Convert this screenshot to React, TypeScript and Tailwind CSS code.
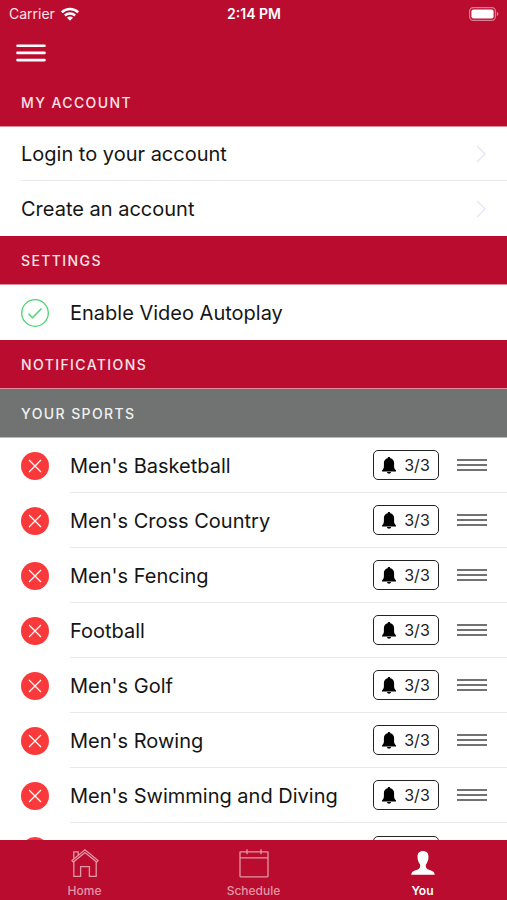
/**
 * Account / settings screen of the sports app
 * Sections of plain rows, the list of followed sports and the bottom tab bar.
 */

import React, { useState } from 'react';

interface Sport {
  id: string;
  name: string;
  alerts: string;
}

const SPORTS: Sport[] = [
  { id: 'mbb', name: "Men's Basketball", alerts: '3/3' },
  { id: 'mxc', name: "Men's Cross Country", alerts: '3/3' },
  { id: 'mfen', name: "Men's Fencing", alerts: '3/3' },
  { id: 'fb', name: 'Football', alerts: '3/3' },
  { id: 'mgolf', name: "Men's Golf", alerts: '3/3' },
  { id: 'mrow', name: "Men's Rowing", alerts: '3/3' },
  { id: 'mswim', name: "Men's Swimming and Diving", alerts: '3/3' }
];

function WifiIcon() {
  return (
    <svg viewBox="0 0 18 14" className="w-[18px] h-3.5" fill="none" stroke="#fff" strokeWidth="2.5" aria-hidden="true">
      <path d="M.8 5.300a11.600 11.600 0 0 1 16.400 0" />
      <path d="M3.900 8.500a7.200 7.200 0 0 1 10.200 0" />
      <path d="M9 13.800 6 10.800a4.200 4.200 0 0 1 6 0Z" fill="#fff" stroke="none" />
    </svg>
  );
}

function BatteryIcon() {
  return (
    <svg viewBox="0 0 30 14" className="w-[30px] h-3.5" aria-hidden="true">
      <rect x="0.6" y="0.6" width="25.8" height="12.8" rx="3.6" fill="none" stroke="#dc7f92" strokeWidth="1.2" />
      <rect x="2.4" y="2.4" width="22.2" height="9.2" rx="2" fill="#fff" />
      <path d="M27.8 4.8v4.400c1-.4 1.600-1.200 1.600-2.200s-.6-1.800-1.600-2.200Z" fill="#dc7f92" />
    </svg>
  );
}

function BellIcon() {
  return (
    <svg viewBox="0 0 14 17" className="w-3.5 h-[17px]" fill="#000" aria-hidden="true">
      <path d="M7 0c-.8 0-1.300.5-1.300 1.200C3.300 1.700 1.900 3.500 1.900 6v3.200c0 1.900-.5 3-1.900 4.300v.9h14v-.9c-1.400-1.300-1.900-2.400-1.900-4.300V6c0-2.500-1.400-4.300-3.800-4.800C8.300.5 7.800 0 7 0Z" />
      <path d="M5 15.100h4c-.1 1.100-.9 1.700-2 1.700s-1.900-.6-2-1.700Z" />
    </svg>
  );
}

function HomeIcon() {
  return (
    <svg viewBox="0 0 28 30" className="w-7 h-[30px]" fill="none" stroke="currentColor" strokeWidth="1.300" aria-hidden="true">
      <path d="M1 12.600 14 1.800l13 10.800-1.300 1.500L14 4.600 2.300 14.100Z" />
      <path d="M2.800 10.800V3.800h4.400v3.500" />
      <path d="M2.800 13.400v15h6.800V18.600h8.800v9.800h6.800v-15" />
    </svg>
  );
}

function CalendarIcon() {
  return (
    <svg viewBox="0 0 30 30" className="w-[30px] h-[30px]" fill="none" stroke="currentColor" strokeWidth="1.300" aria-hidden="true">
      <rect x="1" y="3.800" width="28" height="25" rx="0.500" />
      <path d="M1 9.800h28M8 1.200v5M22 1.200v5" />
    </svg>
  );
}

function PersonIcon() {
  return (
    <svg viewBox="0 0 24 30" className="w-6 h-[30px]" fill="currentColor" aria-hidden="true">
      <path d="M12 2.900c-3.600 0-5.500 2.200-5.500 5.600 0 3.300 1 6.300 2.700 8.200 0 2.700-.4 4-2.400 4.700C3.700 22.500.5 23 .3 26.700h23.400c-.2-3.700-3.400-4.200-6.500-5.300-2-.7-2.400-2-2.400-4.700 1.700-1.900 2.700-4.900 2.700-8.200 0-3.400-1.900-5.600-5.500-5.600Z" />
    </svg>
  );
}

function SectionHeader({ title, muted = false }: { title: string; muted?: boolean }) {
  return (
    <h2
      className={`flex h-[49px] shrink-0 items-center border-b pl-[21px] pt-px text-sm font-medium tracking-widest ${
        muted ? 'border-[#b9bab9] bg-[#707371] text-[#f0f0f0]' : 'border-[#dd8c9b] bg-[#ba0c2f] text-[#fbe3e6]'
      }`}
    >
      {title}
    </h2>
  );
}

function LinkRow({ label, divider = false }: { label: string; divider?: boolean }) {
  return (
    <a href="#" className={`flex shrink-0 pl-[21px] ${divider ? 'h-[54px]' : 'h-[55px]'}`}>
      <span className={`flex flex-1 items-center justify-between pr-5 ${divider ? 'border-b border-[#e9e9eb]' : ''}`}>
        {label}
        <svg viewBox="0 0 12 20" className="w-3 h-5" fill="none" stroke="#e8e6f8" strokeWidth="1.500" aria-hidden="true">
          <path d="m2 2 8 8-8 8" />
        </svg>
      </span>
    </a>
  );
}

function SportRow({ sport, onRemove }: { sport: Sport; onRemove: (id: string) => void }) {
  return (
    <li className="flex h-[55px] shrink-0 items-center pl-[21px]">
      <button onClick={() => onRemove(sport.id)} aria-label={`Remove ${sport.name}`} className="mr-[21px] shrink-0">
        <svg viewBox="0 0 28 28" className="w-7 h-7" aria-hidden="true">
          <circle cx="14" cy="14" r="14" fill="#fa3a3a" />
          <path d="m8 8 12 12M20 8 8 20" stroke="#fff" strokeWidth="1.200" />
        </svg>
      </button>
      <div className="flex h-full flex-1 items-center border-b border-[#e9e9eb] pr-5">
        <span className="flex-1 pt-px">{sport.name}</span>
        <button
          aria-label={`Alerts for ${sport.name}`}
          className="mr-[18px] flex h-[30px] w-[66px] items-center justify-center gap-2 rounded-[5px] border border-[#222] text-base text-[#222]"
        >
          <BellIcon />
          {sport.alerts}
        </button>
        <button aria-label={`Reorder ${sport.name}`}>
          <svg viewBox="0 0 30 12" className="w-[30px] h-3" stroke="#444" strokeWidth="1.500" aria-hidden="true">
            <path d="M0 1h30M0 6h30M0 11h30" />
          </svg>
        </button>
      </div>
    </li>
  );
}

const TABS = [
  { key: 'home', label: 'Home', icon: <HomeIcon /> },
  { key: 'schedule', label: 'Schedule', icon: <CalendarIcon /> },
  { key: 'you', label: 'You', icon: <PersonIcon /> }
];

export default function App() {
  const [sports, setSports] = useState<Sport[]>(SPORTS);
  const [autoplay, setAutoplay] = useState(true);
  const [activeTab, setActiveTab] = useState('you');

  const removeSport = (id: string) => setSports(sports.filter((s) => s.id !== id));

  return (
    <div className="flex h-screen flex-col bg-white font-['Inter','Liberation_Sans',sans-serif] text-xl text-[#151515]">
      <header className="h-[78px] shrink-0 bg-[#ba0c2f] text-white">
        <div className="grid h-7 grid-cols-3 items-center pl-[9px] pr-2 text-sm">
          <div className="flex items-center gap-1.5 text-[#fbe3e6]">
            Carrier
            <WifiIcon />
          </div>
          <span className="text-center font-semibold">2:14 PM</span>
          <div className="flex justify-end">
            <BatteryIcon />
          </div>
        </div>
        <button aria-label="Menu" className="ml-4 mt-4 block">
          <svg viewBox="0 0 30 18" className="w-[30px] h-[18px]" stroke="#fff" strokeWidth="2.600" strokeLinecap="round" aria-hidden="true">
            <path d="M1.500 1.700h27M1.500 8.900h27M1.500 16.100h27" />
          </svg>
        </button>
      </header>

      <main className="flex min-h-0 flex-1 flex-col overflow-hidden">
        <SectionHeader title="MY ACCOUNT" />
        <LinkRow label="Login to your account" divider />
        <LinkRow label="Create an account" />

        <SectionHeader title="SETTINGS" />
        <label className="flex h-[55px] shrink-0 items-center gap-[21px] pl-[21px]">
          <input
            type="checkbox"
            checked={autoplay}
            onChange={(e) => setAutoplay(e.target.checked)}
            className="peer sr-only"
          />
          <svg viewBox="0 0 28 28" className="w-7 h-7" fill="none" stroke="#4cd471" aria-hidden="true">
            <circle cx="14" cy="14" r="13.300" strokeWidth="1.300" />
            {autoplay && <path d="m7.500 14.800 4 4L20.500 9.500" strokeWidth="1.500" />}
          </svg>
          Enable Video Autoplay
        </label>

        <SectionHeader title="NOTIFICATIONS" />
        <SectionHeader title="YOUR SPORTS" muted />
        <ul className="flex flex-col">
          {sports.map((sport) => (
            <SportRow key={sport.id} sport={sport} onRemove={removeSport} />
          ))}
          {/* Next row, only its top edge shows above the tab bar */}
          <li className="flex h-[55px] shrink-0 items-center pl-[21px] pr-[68px]" aria-hidden="true">
            <span className="h-7 w-7 rounded-full bg-[#fa3a3a]" />
            <span className="ml-auto h-[30px] w-[66px] rounded-[5px] border border-[#222]" />
          </li>
        </ul>
      </main>

      <nav className="grid h-[60px] shrink-0 grid-cols-3 bg-[#ba0c2f] text-xs font-medium">
        {TABS.map((tab) => (
          <button
            key={tab.key}
            onClick={() => setActiveTab(tab.key)}
            className={`flex flex-col items-center gap-[5px] pt-2 ${
              activeTab === tab.key ? 'font-semibold text-white' : 'text-[#e297a5]'
            }`}
          >
            {tab.icon}
            {tab.label}
          </button>
        ))}
      </nav>
    </div>
  );
}
